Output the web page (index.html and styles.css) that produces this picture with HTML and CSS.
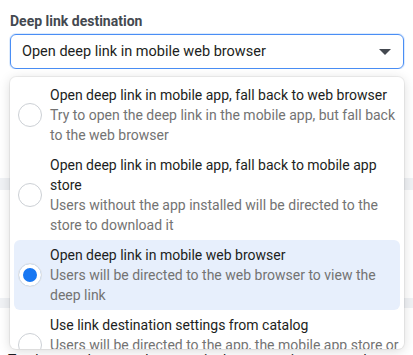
FILE: index.html
```html
<!DOCTYPE html>
<html>
<head>
<meta charset="UTF-8" />
<link rel="stylesheet" href="styles.css">
</head>
<body>

<div class="field">
  <div class="label">Deep link destination</div>
  <div class="select">
    <span>Open deep link in mobile web browser</span>
    <span class="caret"></span>
  </div>

  <div class="menu">
    <div class="item">
      <span class="radio"></span>
      <div class="txt">
        <div class="ttl">Open deep link in mobile app, fall back to web browser</div>
        <div class="desc">Try to open the deep link in the mobile app, but fall back to the web browser</div>
      </div>
    </div>
    <div class="item">
      <span class="radio"></span>
      <div class="txt">
        <div class="ttl">Open deep link in mobile app, fall back to mobile app store</div>
        <div class="desc">Users without the app installed will be directed to the store to download it</div>
      </div>
    </div>
    <div class="item on">
      <span class="radio"></span>
      <div class="txt">
        <div class="ttl">Open deep link in mobile web browser</div>
        <div class="desc">Users will be directed to the web browser to view the deep link</div>
      </div>
    </div>
    <div class="item">
      <span class="radio"></span>
      <div class="txt">
        <div class="ttl">Use link destination settings from catalog</div>
        <div class="desc">Users will be directed to the app, the mobile app store or the web browser based on your catalog settings</div>
      </div>
    </div>
  </div>
</div>

<div class="behind">
  <div class="card c1"></div>
  <div class="card c2"></div>
  <div class="card c3">
    <p>Track event datasets that contain the conversions your ad might motivate.</p>
  </div>
</div>

</body>
</html>
```

FILE: styles.css
```css
* {
  box-sizing: border-box;
}

body {
  margin: 0;
  font-family: Roboto, "Liberation Sans", sans-serif;
  font-size: 14px;
  color: #1c1e21;
  background: #f0f2f5;
  overflow: hidden;
}

div.field {
  background: #fff;
  padding: 13px 9px 0 10px;
}

div.label {
  font-weight: bold;
  color: #444950;
  line-height: 16px;
  margin-bottom: 5px;
}

div.select {
  display: flex;
  align-items: center;
  justify-content: space-between;
  height: 35px;
  padding: 0 12px 0 11px;
  border: 1px solid #4a8ef5;
  border-radius: 6px;
  box-shadow: 0 0 0 1px rgba(24, 119, 242, 0.15);
  font-size: 14.5px;
}

span.caret {
  width: 0;
  height: 0;
  border-left: 6px solid transparent;
  border-right: 6px solid transparent;
  border-top: 6px solid #444950;
}

div.menu {
  position: absolute;
  top: 77px;
  left: 10px;
  width: 394px;
  height: 272px;
  overflow: hidden;
  background: #fff;
  border-radius: 6px;
  box-shadow: 0 2px 12px rgba(0, 0, 0, 0.15), 0 0 0 1px rgba(0, 0, 0, 0.05);
  padding: 3px 4px;
}

div.item {
  display: flex;
  align-items: center;
  gap: 8px;
  padding: 5px 0 5px 4px;
  border-radius: 6px;
  line-height: 20px;
}

div.item.on {
  background: #e7effc;
}

span.radio {
  flex: none;
  width: 24px;
  height: 24px;
  border-radius: 50%;
  border: 1px solid #ccd0d5;
  background: #fff;
}

div.item.on span.radio {
  border-color: #dadde1;
  box-shadow: inset 0 0 0 4px #fff, inset 0 0 0 12px #1877f2;
}

div.txt {
  flex: 1;
}

div.desc {
  color: #737373;
}

div.card {
  background: #fff;
}

div.c1 {
  height: 109px;
  margin-bottom: 12px;
}

div.c2 {
  height: 108px;
  margin-bottom: 10px;
}

div.c3 {
  height: 60px;
  padding: 43px 8px 0;
  overflow: hidden;
}

div.c3 p {
  margin: 0;
  font-size: 14px;
  line-height: 18px;
}
```
